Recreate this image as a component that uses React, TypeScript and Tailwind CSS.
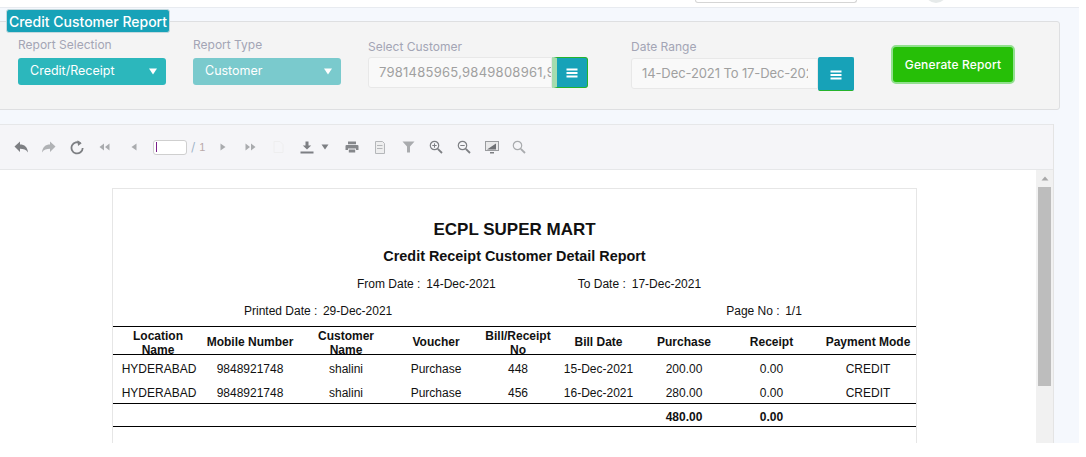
import React from "react";

const I = ({ w = 16, h = 16, children, className = "" }: { w?: number; h?: number; children: React.ReactNode; className?: string }) => (
  <svg width={w} height={h} viewBox={`0 0 ${w} ${h}`} className={`shrink-0 ${className}`}>{children}</svg>
);

const Bars = () => (
  <svg width="12" height="10" viewBox="0 0 12 10"><path d="M0.5 0.5h11v2H0.5zM0.5 4h11v2H0.5zM0.5 7.500h11v2H0.5z" fill="#fff" /></svg>
);

const Caret = () => <svg width="10" height="7" viewBox="0 0 10 7"><path d="M1 0.5h8L5 6.5z" fill="#fff" /></svg>;

const Field = ({ label, value, bg, ml }: { label: string; value: string; bg: string; ml: string }) => (
  <div className={`w-[148px] ${ml} shrink-0`}>
    <div className="text-[12px] leading-[18px] text-[#a3a5b5]">{label}</div>
    <div className={`mt-[4px] h-[27px] rounded-[3px] ${bg} flex items-center justify-between pl-[12px] pr-[8px] text-white text-[12.5px]`}>
      <span>{value}</span>
      <Caret />
    </div>
  </div>
);

const MagGlass = ({ color, inner }: { color: string; inner?: React.ReactNode }) => (
  <I w={14} h={14}>
    <circle cx="5.5" cy="5.5" r="4.2" fill="none" stroke={color} strokeWidth="1.2" />
    <path d="M8.8 8.8l4.2 4.2" stroke={color} strokeWidth="1.8" />
    {inner}
  </I>
);

const rows = [
  ["HYDERABAD", "9848921748", "shalini", "Purchase", "448", "15-Dec-2021", "200.00", "0.00", "CREDIT"],
  ["HYDERABAD", "9848921748", "shalini", "Purchase", "456", "16-Dec-2021", "280.00", "0.00", "CREDIT"],
];

const headers = [
  { t: "Location Name", two: true, w: "w-[90px]" },
  { t: "Mobile Number", two: false, w: "w-[94px]" },
  { t: "Customer Name", two: true, w: "w-[98px]" },
  { t: "Voucher", two: false, w: "w-[82px]" },
  { t: "Bill/Receipt No", two: true, w: "w-[82px]" },
  { t: "Bill Date", two: false, w: "w-[79px]" },
  { t: "Purchase", two: false, w: "w-[92px]" },
  { t: "Receipt", two: false, w: "w-[83px]" },
  { t: "Payment Mode", two: false, w: "w-[103px]" },
];

export default function App() {
  return (
    <div className="w-[1086px] h-[457px] bg-white overflow-hidden font-['Inter',sans-serif]">
      <div className="w-[1079px] h-[443px] bg-[#f5f8fd] overflow-hidden relative">
        {/* top strip */}
        <div className="h-[8px] bg-white border-b border-[#e8ebf0] flex items-start">
          <div className="ml-[695px] w-[162px] h-[3px] border border-t-0 border-[#d5d5d5] rounded-b-[3px]" />
          <div className="ml-[68px] w-[22px] h-[3px] overflow-hidden">
            <div className="w-[22px] h-[22px] -mt-[19px] rounded-full bg-[#e6eaea]" />
          </div>
        </div>

        {/* filter panel */}
        <div className="ml-[-4px] mt-[13px] w-[1064px] h-[89px] bg-[#f4f4f4] border border-[#dedfe1] rounded-[3px] flex items-start pl-[21px] pt-[14px]">
          <Field label="Report Selection" value="Credit/Receipt" bg="bg-[#2cb7bc]" ml="ml-0" />
          <Field label="Report Type" value="Customer" bg="bg-[#7acacd]" ml="ml-[27px]" />
          <div className="ml-[27px] w-[221px] shrink-0 pt-[2px]">
            <div className="text-[12px] leading-[18px] text-[#a3a5b5]">Select Customer</div>
            <div className="mt-[1px] flex items-stretch h-[31px]">
              <div className="w-[184px] bg-[#f9f9f9] border border-[#e8e8e8] rounded-l-[3px] pl-[10px] text-[13px] leading-[29px] text-[#a0a0a0] overflow-hidden whitespace-nowrap tracking-[0.25px]">7981485965,9849808961,9</div>
              <div className="w-[36px] bg-[#17a2b8] border border-[#25b32c] border-l-[5px] border-l-[#a6dcae] rounded-r-[3px] flex items-center justify-center pt-[1px]"><Bars /></div>
            </div>
          </div>
          <div className="ml-[42px] w-[223px] shrink-0 pt-[2px]">
            <div className="text-[12px] leading-[18px] text-[#a3a5b5]">Date Range</div>
            <div className="mt-[2px] flex items-start h-[31px]">
              <div className="w-[187px] h-[31px] bg-[#f9f9f9] border border-[#e8e8e8] rounded-l-[3px] pl-[10px] text-[13px] leading-[29px] text-[#a0a0a0]">
                <div className="w-[166px] overflow-hidden whitespace-nowrap tracking-[-0.1px]">14-Dec-2021 To 17-Dec-2021</div>
              </div>
              <div className="w-[36px] -mt-[1px] h-[34px] shrink-0 bg-[#17a2b8] border border-[#17a2b8] border-b-[#25b32c] rounded-[2px] flex items-center justify-center pt-[1px]"><Bars /></div>
            </div>
          </div>
          <button className="ml-[37px] mt-[9px] w-[124px] h-[39px] bg-[#26bf07] border-[2px] border-[#92e08f] rounded-[5px] text-white text-[12px] font-medium tracking-[0.15px]">Generate Report</button>
        </div>

        {/* title badge */}
        <div className="absolute left-[6px] top-[9px] h-[24px] w-[164px] bg-[#17a2b8] border border-[#c4d9de] rounded-[3px] flex items-center justify-center text-white text-[14px] font-medium whitespace-nowrap">Credit Customer Report</div>

        {/* viewer */}
        <div className="mt-[14px] w-[1054px] h-[319px] border-r border-[#e4e4e4] flex flex-col">
          <div className="h-[46px] shrink-0 bg-[#f5f5f8] border-y border-[#e6e7e9] flex items-center pl-[14px]">
            <I w={14} h={12}><path d="M6 0.500v3C10.500 3.500 13.500 6 14 11.500 12 8.500 9.500 7.800 6 7.800v3.200L0.500 5.500z" fill="#7d7f83" /></I>
            <I w={14} h={12} className="ml-[14px]"><path d="M8 0.500v3C3.500 3.500 .5 6 0 11.500 2 8.500 4.500 7.800 8 7.800v3.200L13.500 5.500z" fill="#b0b2b5" /></I>
            <I w={14} h={15} className="ml-[14px]">
              <path d="M10.500 3.400A5.600 5.600 0 1 0 12.700 8" fill="none" stroke="#7d7f83" strokeWidth="1.8" />
              <path d="M7.500 0.200l4.200 3-3.700 2.800z" fill="#7d7f83" />
            </I>
            <I w={11} h={8} className="ml-[15px]"><path d="M5 0.500v7L0.500 4zM10.500 0.500v7L6 4z" fill="#a9abae" /></I>
            <I w={6} h={8} className="ml-[21px]"><path d="M5.500 0.500v7L0.500 4z" fill="#a9abae" /></I>
            <div className="ml-[16px] w-[34px] h-[15px] bg-white border border-[#cfcfcf] rounded-[3px] flex items-center pl-[2px]"><div className="w-[1px] h-[10px] bg-[#7a1f8a]" /></div>
            <span className="ml-[4px] text-[12px] text-[#9fb4c8]">/</span>
            <span className="ml-[4px] text-[11px] text-[#b9a9a9] font-['Liberation_Sans',sans-serif]">1</span>
            <I w={6} h={8} className="ml-[15px]"><path d="M0.500 0.500v7L5.500 4z" fill="#a9abae" /></I>
            <I w={11} h={8} className="ml-[19px]"><path d="M0.500 0.500v7L5 4zM6 0.500v7L10.500 4z" fill="#a9abae" /></I>
            <I w={11} h={12} className="ml-[17px]"><path d="M1 .5h6l3 3v8H1z" fill="none" stroke="#eeeeef" strokeWidth="1" /></I>
            <I w={15} h={13} className="ml-[16px]"><path d="M5.500 0.500h3v4h2.700L7 8.500 2.800 4.500h2.700zM0.500 10.500h13v2h-13z" fill="#7d7f83" /></I>
            <I w={8} h={6} className="ml-[6px]"><path d="M0.500 0.500h7L4 5.500z" fill="#7d7f83" /></I>
            <I w={14} h={12} className="ml-[16px]"><path d="M3 0.500h8v2.800H3zM1.500 4h11a1 1 0 0 1 1 1v4h-2.500V7.500H3V9H.5V5a1 1 0 0 1 1-1zM3.800 8.500h6.400v3H3.800z" fill="#85878b" /></I>
            <I w={12} h={13} className="ml-[15px]"><path d="M1.500 .5h7l2 2v10h-9z" fill="#eeeeef" stroke="#b5b7ba" strokeWidth="1" /><path d="M3 4h5.500v1H3zM3 7h5.500v1H3z" fill="#b5b7ba" /></I>
            <I w={13} h={12} className="ml-[16px]"><path d="M0.500 0.500h12L8 5.500V11.500H5V5.500z" fill="#a9abae" /></I>
            <span className="ml-[14px] flex"><MagGlass color="#7d7f83" inner={<path d="M3.300 5.500h4.400M5.500 3.300v4.400" stroke="#7d7f83" strokeWidth="1" />} /></span>
            <span className="ml-[14px] flex"><MagGlass color="#7d7f83" inner={<path d="M3.300 5.500h4.400" stroke="#7d7f83" strokeWidth="1" />} /></span>
            <I w={14} h={13} className="ml-[14px]"><rect x="0.500" y="0.500" width="13" height="9" fill="#e9e9ea" stroke="#9a9c9f" /><path d="M2 8.500L11 2.500V8.500z" fill="#6f7175" /><path d="M5 11h4v1.500H5z" fill="#7d7f83" /></I>
            <span className="ml-[13px] flex"><MagGlass color="#a9abae" /></span>
          </div>

          <div className="flex-1 min-h-0 bg-white flex relative">
            <div className="flex-1 min-w-0 overflow-hidden pt-[18px] pl-[112px]">
              <div className="w-[805px] h-[300px] border border-[#e6e6e6] font-['Liberation_Sans',sans-serif] text-[#111] text-[12px]">
                <div className="text-center font-bold text-[17px] leading-[20px] mt-[31px]">ECPL SUPER MART</div>
                <div className="text-center font-bold text-[14.4px] leading-[18px] mt-[7px]">Credit Receipt Customer Detail Report</div>
                <div className="flex leading-[14px] mt-[12px] pl-[244px]">
                  <span>From Date :</span>
                  <span className="ml-[6px]">14-Dec-2021</span>
                  <span className="ml-[82px]">To Date :</span>
                  <span className="ml-[6px]">17-Dec-2021</span>
                </div>
                <div className="flex leading-[14px] mt-[13px] pl-[131px]">
                  <span>Printed Date :</span>
                  <span className="ml-[5.5px]">29-Dec-2021</span>
                  <span className="ml-[334px]">Page No :</span>
                  <span className="ml-[5.5px]">1/1</span>
                </div>
                <table className="w-[803px] mt-[8px] table-fixed border-collapse">
                  <thead>
                    <tr className="border-y border-black">
                      {headers.map((h, i) => (
                        <th key={h.t} className={`${h.w} ${i === 8 ? "pl-[7px]" : "p-0"} font-bold text-center leading-[14px] align-top`}>
                          <div className={`h-[27px] ${h.two ? "pt-[2px] px-[6px]" : "pt-[8px] whitespace-nowrap"}`}>{h.t}</div>
                        </th>
                      ))}
                    </tr>
                  </thead>
                  <tbody>
                    {rows.map((r, ri) => (
                      <tr key={ri} className={ri === 0 ? "h-[25px]" : "h-[24px]"}>
                        {r.map((c, i) => (
                          <td key={i} className={`text-center pt-[4px] ${i === 8 ? "pl-[7px]" : i === 0 ? "pl-[2px]" : ""}`}>{c}</td>
                        ))}
                      </tr>
                    ))}
                    <tr className="border-y border-black h-[23px] font-bold">
                      <td colSpan={6} />
                      <td className="text-center pt-[4px]">480.00</td>
                      <td className="text-center pt-[4px]">0.00</td>
                      <td />
                    </tr>
                  </tbody>
                </table>
              </div>
            </div>
            <div className="w-[17px] shrink-0 bg-[#f1f1f1] flex flex-col items-center">
              <div className="h-[17px] flex items-center"><svg width="8" height="5" viewBox="0 0 8 5"><path d="M4 0.500L7.500 4.500H.5z" fill="#a8a8a8" /></svg></div>
              <div className="w-[13px] h-[199px] bg-[#bdbdbd]" />
            </div>
          </div>
        </div>
      </div>
    </div>
  );
}
